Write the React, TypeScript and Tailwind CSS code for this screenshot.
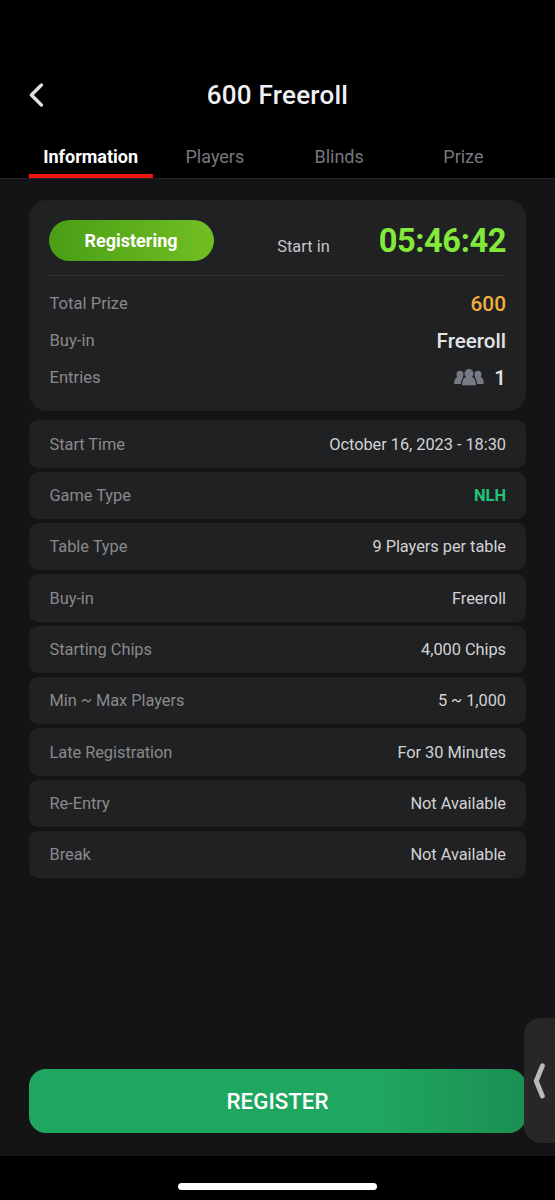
type Row = {
  label: string;
  value: string;
  highlight?: boolean;
};

const tabs = ["Information", "Players", "Blinds", "Prize"];

const rows: Row[] = [
  { label: "Start Time", value: "October 16, 2023 - 18:30" },
  { label: "Game Type", value: "NLH", highlight: true },
  { label: "Table Type", value: "9 Players per table" },
  { label: "Buy-in", value: "Freeroll" },
  { label: "Starting Chips", value: "4,000 Chips" },
  { label: "Min ~ Max Players", value: "5 ~ 1,000" },
  { label: "Late Registration", value: "For 30 Minutes" },
  { label: "Re-Entry", value: "Not Available" },
  { label: "Break", value: "Not Available" },
];

function PlayersIcon() {
  return (
    <svg width="30" height="17" viewBox="0 0 30 17" fill="#777a85">
      <circle cx="6" cy="5.2" r="3.5" />
      <path d="M0.3 15.1V13c0-2.7 1.5-4.2 3.3-5.6h4.8c.5.4.7.8.8 1.1-1.5 1.5-2.2 3.6-2.4 6.6z" />
      <circle cx="24" cy="5.2" r="3.5" />
      <path d="M29.7 15.1V13c0-2.7-1.5-4.2-3.3-5.6h-4.8c-.5.4-.7.8-.8 1.1 1.5 1.5 2.2 3.6 2.4 6.6z" />
      <circle cx="15" cy="4.6" r="4.5" />
      <path d="M8.1 16.2v-1.6c0-3.3 1.6-5.4 4.3-7h5.2c2.7 1.6 4.3 3.7 4.3 7v1.6z" />
    </svg>
  );
}

function Header() {
  return (
    <header className="h-[179px] shrink-0 bg-black border-b border-[#242427] flex flex-col">
      <div className="mt-[71px] h-12 px-[29px] grid grid-cols-[40px_1fr_40px] items-center">
        <svg width="15" height="24" viewBox="0 0 15 24" fill="none" stroke="#dedede" strokeWidth="3.4" strokeLinecap="round" strokeLinejoin="round">
          <path d="M12.4 2 2.4 12l10 10" />
        </svg>
        <h1 className="pt-[2px] text-center text-[26px] font-medium tracking-[0.25px] text-[#f0f0f5]">600 Freeroll</h1>
      </div>
      <nav className="mt-[16px] mx-[29px] h-[44px] grid grid-cols-4 text-[18px] text-[#77777d]">
        {tabs.map((tab, i) => (
          <div
            key={tab}
            className={
              i === 0
                ? "flex justify-center pt-[9px] pr-px font-bold text-white border-b-4 border-[#f01414]"
                : "flex justify-center pt-[9px] pr-px"
            }
          >
            {tab}
          </div>
        ))}
      </nav>
    </header>
  );
}

function Summary() {
  return (
    <section className="h-[211px] rounded-[18px] bg-[#202122] px-[20px] pt-[20px]">
      <div className="h-[56px] flex items-start border-b border-[#303133]">
        <div className="w-[165px] h-[41px] pr-px rounded-full bg-linear-to-r from-[#489e15] to-[#72bf23] flex items-center justify-center text-[18px] font-bold text-white">
          Registering
        </div>
        <span className="ml-auto mt-[15px] text-[16.4px] text-[#c6c6c8]">Start in</span>
        <span className="ml-[49px] text-[32.6px] tracking-[-0.4px] leading-[43px] font-bold text-[#83e93a]">05:46:42</span>
      </div>
      <div className="mt-[9px] text-[16.6px] text-[#89898c]">
        <div className="h-[37px] flex items-center justify-between">
          <span className="pt-[2px] pl-[0.5px]">Total Prize</span>
          <span className="pt-[2px] text-[20.8px] font-medium text-[#f2ae3a]">600</span>
        </div>
        <div className="h-[37px] flex items-center justify-between">
          <span className="pt-[2px] pl-[0.5px]">Buy-in</span>
          <span className="pt-[1px] text-[20.6px] font-medium text-[#e2e2e4]">Freeroll</span>
        </div>
        <div className="h-[37px] flex items-center justify-between">
          <span className="pt-[2px] pl-[0.5px]">Entries</span>
          <span className="flex items-center gap-[10px] text-[20.6px] font-medium text-[#e2e2e4]">
            <PlayersIcon />
            <span className="pt-[1px]">1</span>
          </span>
        </div>
      </div>
    </section>
  );
}

export default function App() {
  return (
    <div className="relative w-[555px] h-[1200px] overflow-hidden bg-[#141416] flex flex-col font-['Roboto',sans-serif]">
      <Header />
      <main className="flex-1 px-[29px] pt-[21px] flex flex-col">
        <Summary />
        <ul className="mt-[9.4px] space-y-[4px]">
          {rows.map((row) => (
            <li
              key={row.label}
              className="h-[47.35px] pl-[20.5px] pr-[20px] pt-[1.6px] rounded-[9px] bg-[#202122] flex items-center justify-between text-[16.4px]"
            >
              <span className="tracking-[-0.04px] text-[#89898c]">{row.label}</span>
              <span className={row.highlight ? "font-bold text-[#1dc777]" : "tracking-[-0.05px] text-[#d2d2d4]"}>{row.value}</span>
            </li>
          ))}
        </ul>
        <button className="mt-auto mb-[23px] h-[64px] pt-[2px] rounded-[17px] bg-linear-to-r from-[#1fa660] from-70% to-[#1b8f52] text-[22.3px] font-medium text-white">
          REGISTER
        </button>
      </main>
      <footer className="h-[44px] shrink-0 bg-black flex justify-center pt-[27px]">
        <div className="w-[199px] h-[7px] rounded-full bg-white" />
      </footer>
      <div className="absolute right-0 top-[1018px] w-[31px] h-[125px] rounded-l-[17px] bg-[#272728] flex items-center pl-[9px]">
        <svg width="13" height="36" viewBox="0 0 13 36" fill="none" stroke="#b9b8bd" strokeWidth="4.8" strokeLinecap="round" strokeLinejoin="round">
          <path d="M9.4 2.8 3.2 18l6.2 15" />
        </svg>
      </div>
    </div>
  );
}
